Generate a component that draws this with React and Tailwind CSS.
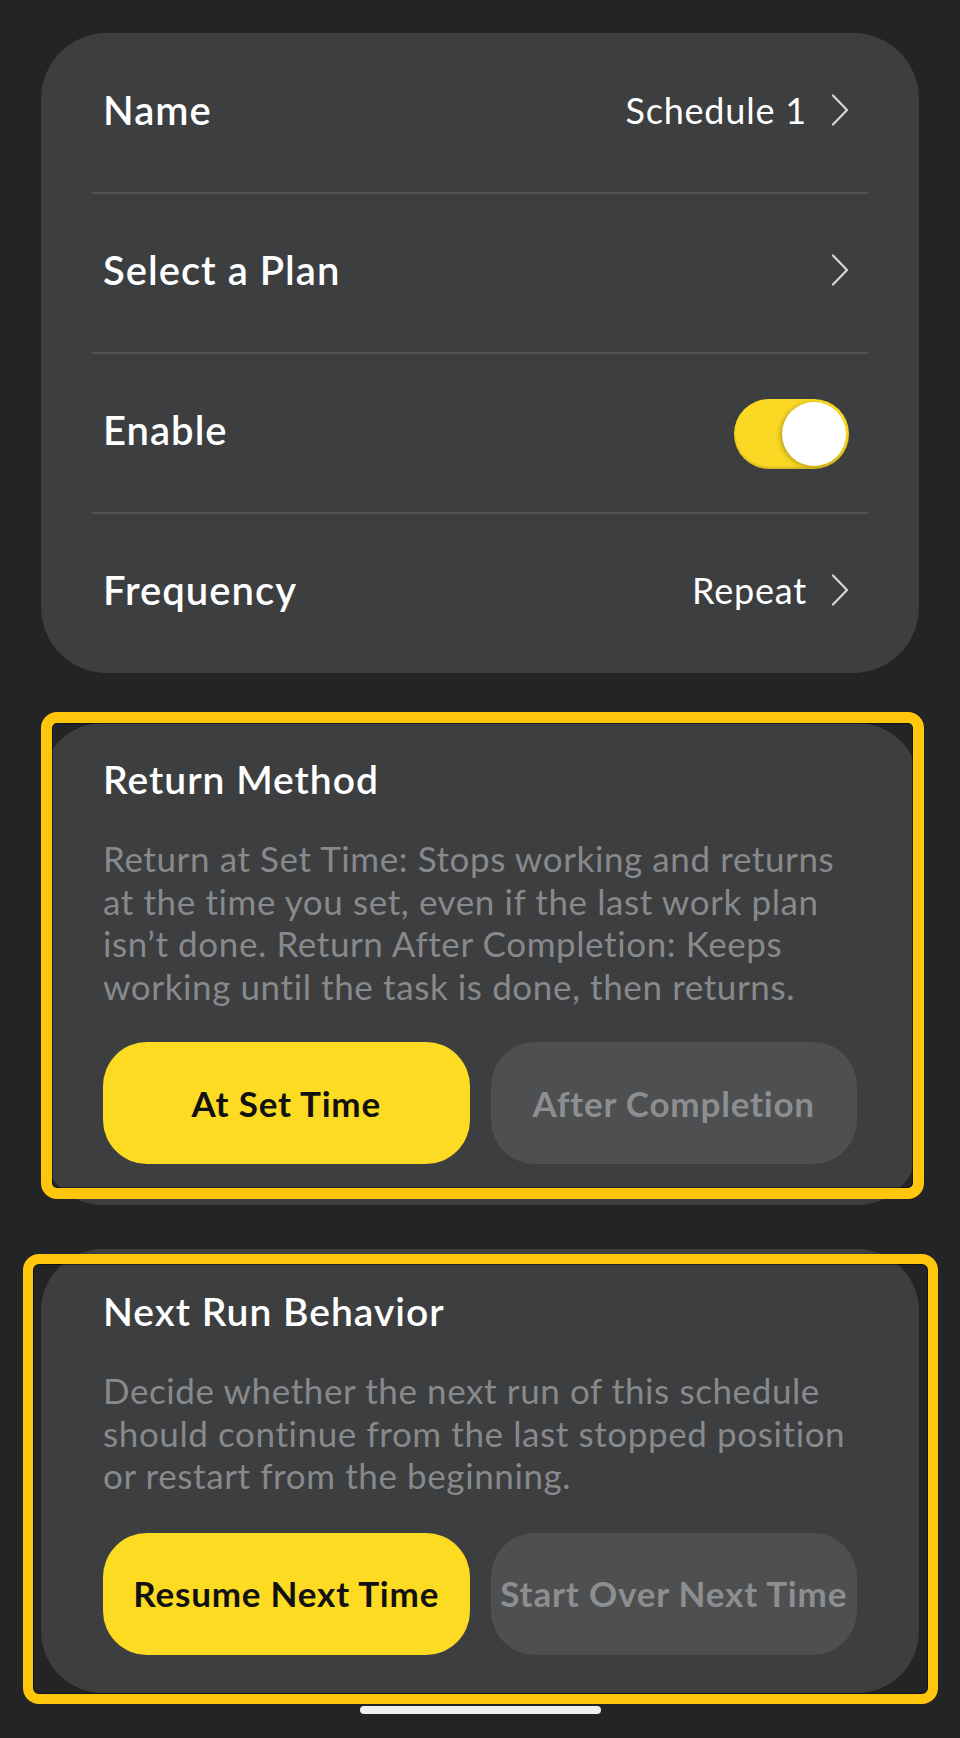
const Chevron = () => (
  <svg width="18" height="32" viewBox="0 0 18 32" fill="none" className="shrink-0">
    <polyline points="2,1.5 16,16 2,30.5" stroke="#d6d6d8" strokeWidth="2.2" strokeLinecap="round" strokeLinejoin="round" />
  </svg>
);

const Row = ({ label, children }) => (
  <div className="flex h-[158px] items-center justify-between pb-[6px] pl-[11px] pr-[19px]">
    <span className="text-[40px] font-semibold tracking-[1px] text-white">{label}</span>
    <div className="flex items-center gap-[24px]">{children}</div>
  </div>
);

const Divider = () => <div className="h-[2px] bg-[#525355]" />;

const Choice = ({ active, children }) => (
  <button
    className={
      active
        ? "flex h-[122px] flex-1 items-center justify-center whitespace-nowrap rounded-[44px] bg-[#fddb22] text-[35px] font-bold tracking-[0.8px] text-[#111]"
        : "flex h-[122px] flex-1 items-center justify-center whitespace-nowrap rounded-[44px] bg-[#4e4f51] text-[35px] font-bold tracking-[0.8px] text-[#8d8e90]"
    }
  >
    {children}
  </button>
);

export default function App() {
  return (
    <div
      className="flex min-h-[1738px] w-[960px] flex-col bg-[#232426] px-[41px] pt-[33px]"
      style={{ fontFamily: "Lato, 'Noto Sans', sans-serif" }}
    >
      {/* settings list */}
      <div className="rounded-[66px] bg-[#3d3e40] px-[51px] py-[1px]">
        <Row label="Name">
          <span className="text-[36px] tracking-[0.8px] text-white">Schedule 1</span>
          <Chevron />
        </Row>
        <Divider />
        <Row label="Select a Plan">
          <Chevron />
        </Row>
        <Divider />
        <Row label="Enable">
          <div className="mt-[7px] flex h-[70px] w-[115px] items-center justify-end rounded-full bg-[#fbd823] p-[3px] shadow-[inset_0_-2px_2px_rgba(0,0,0,0.15)]">
            <div className="h-[64px] w-[64px] rounded-full bg-white shadow-[-2px_1px_4px_rgba(0,0,0,0.25)]" />
          </div>
        </Row>
        <Divider />
        <Row label="Frequency">
          <span className="text-[36px] tracking-[0.8px] text-white">Repeat</span>
          <Chevron />
        </Row>
      </div>

      {/* return method */}
      <div className="relative mt-[50px] rounded-[62px] bg-[#3d3e40] px-[62px] pt-[31px] pb-[41px]">
        <h2 className="text-[39px] leading-[50px] font-semibold tracking-[1px] text-white">Return Method</h2>
        <p className="mt-[33px] text-[35px] leading-[42.5px] tracking-[0.6px] text-[#88898b]">
          Return at Set Time: Stops working and returns at the time you set, even if the last work plan isn’t done. Return After Completion: Keeps working until the task is done, then returns.
        </p>
        <div className="mt-[35px] flex gap-[21px]">
          <Choice active>At Set Time</Choice>
          <Choice>After Completion</Choice>
        </div>
        <div className="pointer-events-none absolute -top-[11px] -right-[5px] bottom-[6px] left-0 rounded-[16px] border-[11px] border-[#ffc60b] shadow-[inset_0_0_0_1px_rgba(0,0,0,0.5)]" />
      </div>

      {/* next run behavior */}
      <div className="relative mt-[44px] rounded-[62px] bg-[#3d3e40] px-[62px] pt-[37px] pb-[38px]">
        <h2 className="text-[39px] leading-[50px] font-semibold tracking-[1px] text-white">Next Run Behavior</h2>
        <p className="mt-[33px] text-[35px] leading-[42.5px] tracking-[0.6px] text-[#88898b]">
          Decide whether the next run of this schedule should continue from the last stopped position or restart from the beginning.
        </p>
        <div className="mt-[36px] flex gap-[21px]">
          <Choice active>Resume Next Time</Choice>
          <Choice>Start Over Next Time</Choice>
        </div>
        <div className="pointer-events-none absolute top-[5px] -right-[19px] -bottom-[11px] -left-[18px] rounded-[16px] border-[10px] border-[#ffc60b] shadow-[inset_0_0_0_1px_rgba(0,0,0,0.5)]" />
      </div>

      {/* home indicator */}
      <div className="mt-[13px] flex justify-center">
        <div className="h-[8px] w-[241px] rounded-full bg-[#eceef0]" />
      </div>
    </div>
  );
}
